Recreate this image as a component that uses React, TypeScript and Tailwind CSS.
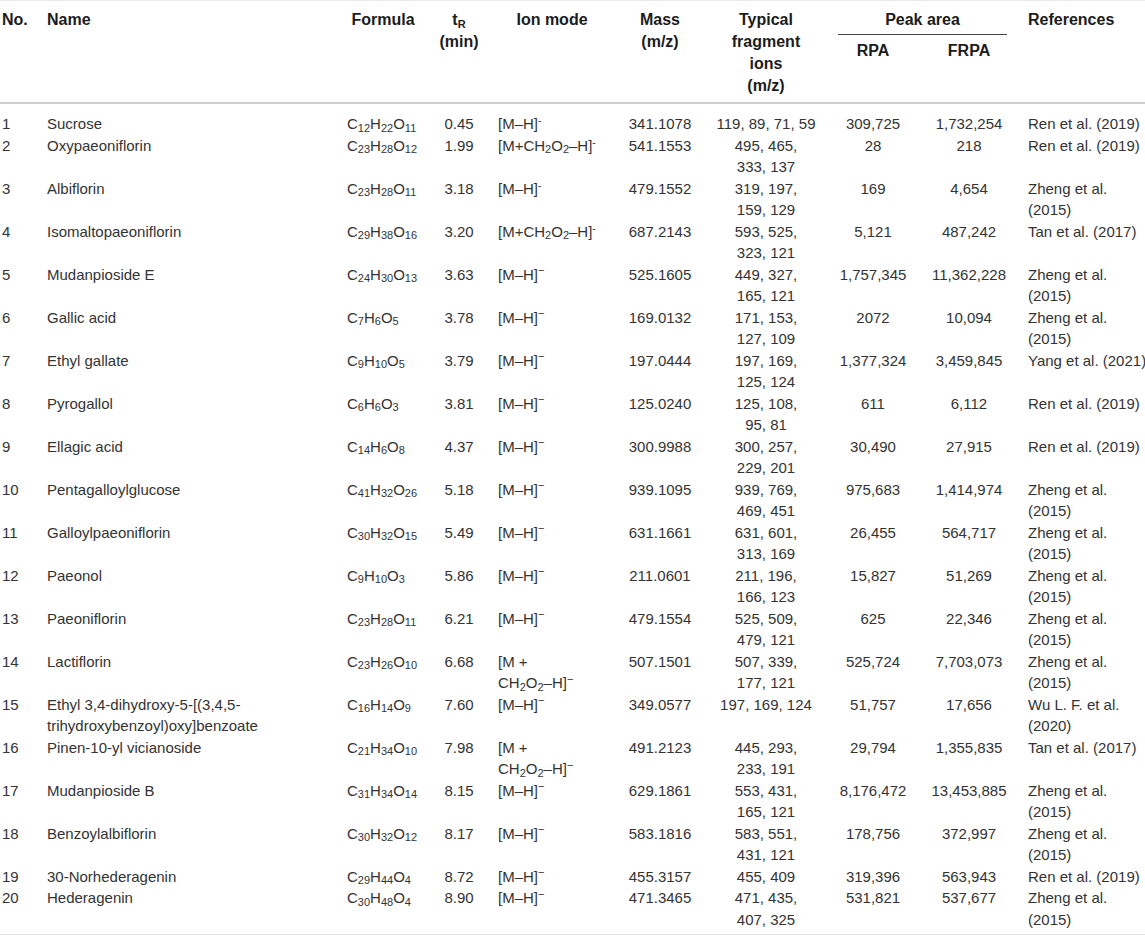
type Row = {
  no: number
  name: string[]
  formula: string
  tr: string
  ion: 'mh' | 'mhOld' | 'fa' | 'faWrap'
  mass: string
  frag: string[]
  rpa: string
  frpa: string
  refs: string[]
}

const zheng = ['Zheng et al.', '(2015)']
const ren = ['Ren et al. (2019)']

const rows: Row[] = [
  { no: 1, name: ['Sucrose'], formula: 'C12H22O11', tr: '0.45', ion: 'mhOld', mass: '341.1078', frag: ['119, 89, 71, 59'], rpa: '309,725', frpa: '1,732,254', refs: ren },
  { no: 2, name: ['Oxypaeoniflorin'], formula: 'C23H28O12', tr: '1.99', ion: 'fa', mass: '541.1553', frag: ['495, 465,', '333, 137'], rpa: '28', frpa: '218', refs: ren },
  { no: 3, name: ['Albiflorin'], formula: 'C23H28O11', tr: '3.18', ion: 'mhOld', mass: '479.1552', frag: ['319, 197,', '159, 129'], rpa: '169', frpa: '4,654', refs: zheng },
  { no: 4, name: ['Isomaltopaeoniflorin'], formula: 'C29H38O16', tr: '3.20', ion: 'fa', mass: '687.2143', frag: ['593, 525,', '323, 121'], rpa: '5,121', frpa: '487,242', refs: ['Tan et al. (2017)'] },
  { no: 5, name: ['Mudanpioside E'], formula: 'C24H30O13', tr: '3.63', ion: 'mh', mass: '525.1605', frag: ['449, 327,', '165, 121'], rpa: '1,757,345', frpa: '11,362,228', refs: zheng },
  { no: 6, name: ['Gallic acid'], formula: 'C7H6O5', tr: '3.78', ion: 'mh', mass: '169.0132', frag: ['171, 153,', '127, 109'], rpa: '2072', frpa: '10,094', refs: zheng },
  { no: 7, name: ['Ethyl gallate'], formula: 'C9H10O5', tr: '3.79', ion: 'mh', mass: '197.0444', frag: ['197, 169,', '125, 124'], rpa: '1,377,324', frpa: '3,459,845', refs: ['Yang et al. (2021)'] },
  { no: 8, name: ['Pyrogallol'], formula: 'C6H6O3', tr: '3.81', ion: 'mh', mass: '125.0240', frag: ['125, 108,', '95, 81'], rpa: '611', frpa: '6,112', refs: ren },
  { no: 9, name: ['Ellagic acid'], formula: 'C14H6O8', tr: '4.37', ion: 'mh', mass: '300.9988', frag: ['300, 257,', '229, 201'], rpa: '30,490', frpa: '27,915', refs: ren },
  { no: 10, name: ['Pentagalloylglucose'], formula: 'C41H32O26', tr: '5.18', ion: 'mh', mass: '939.1095', frag: ['939, 769,', '469, 451'], rpa: '975,683', frpa: '1,414,974', refs: zheng },
  { no: 11, name: ['Galloylpaeoniflorin'], formula: 'C30H32O15', tr: '5.49', ion: 'mh', mass: '631.1661', frag: ['631, 601,', '313, 169'], rpa: '26,455', frpa: '564,717', refs: zheng },
  { no: 12, name: ['Paeonol'], formula: 'C9H10O3', tr: '5.86', ion: 'mh', mass: '211.0601', frag: ['211, 196,', '166, 123'], rpa: '15,827', frpa: '51,269', refs: zheng },
  { no: 13, name: ['Paeoniflorin'], formula: 'C23H28O11', tr: '6.21', ion: 'mh', mass: '479.1554', frag: ['525, 509,', '479, 121'], rpa: '625', frpa: '22,346', refs: zheng },
  { no: 14, name: ['Lactiflorin'], formula: 'C23H26O10', tr: '6.68', ion: 'faWrap', mass: '507.1501', frag: ['507, 339,', '177, 121'], rpa: '525,724', frpa: '7,703,073', refs: zheng },
  { no: 15, name: ['Ethyl 3,4-dihydroxy-5-[(3,4,5-', 'trihydroxybenzoyl)oxy]benzoate'], formula: 'C16H14O9', tr: '7.60', ion: 'mh', mass: '349.0577', frag: ['197, 169, 124'], rpa: '51,757', frpa: '17,656', refs: ['Wu L. F. et al.', '(2020)'] },
  { no: 16, name: ['Pinen-10-yl vicianoside'], formula: 'C21H34O10', tr: '7.98', ion: 'faWrap', mass: '491.2123', frag: ['445, 293,', '233, 191'], rpa: '29,794', frpa: '1,355,835', refs: ['Tan et al. (2017)'] },
  { no: 17, name: ['Mudanpioside B'], formula: 'C31H34O14', tr: '8.15', ion: 'mh', mass: '629.1861', frag: ['553, 431,', '165, 121'], rpa: '8,176,472', frpa: '13,453,885', refs: zheng },
  { no: 18, name: ['Benzoylalbiflorin'], formula: 'C30H32O12', tr: '8.17', ion: 'mh', mass: '583.1816', frag: ['583, 551,', '431, 121'], rpa: '178,756', frpa: '372,997', refs: zheng },
  { no: 19, name: ['30-Norhederagenin'], formula: 'C29H44O4', tr: '8.72', ion: 'mh', mass: '455.3157', frag: ['455, 409'], rpa: '319,396', frpa: '563,943', refs: ren },
  { no: 20, name: ['Hederagenin'], formula: 'C30H48O4', tr: '8.90', ion: 'mh', mass: '471.3465', frag: ['471, 435,', '407, 325'], rpa: '531,821', frpa: '537,677', refs: zheng },
]

// "C12H22O11" -> C<sub>12</sub>H<sub>22</sub>O<sub>11</sub>
function Formula({ f }: { f: string }) {
  const parts = f.match(/[A-Z][a-z]?|\d+/g) || []
  return (
    <>
      {parts.map((p, i) =>
        /\d/.test(p) ? (
          <sub key={i} className="text-[11px]">{p}</sub>
        ) : (
          <span key={i}>{p}</span>
        )
      )}
    </>
  )
}

function IonMode({ kind }: { kind: Row['ion'] }) {
  if (kind === 'mhOld') {
    return <>[M–H]<sup className="text-[10px]">-</sup></>
  }
  if (kind === 'mh') {
    return <>[M–H]<sup className="text-[11px]">−</sup></>
  }
  if (kind === 'fa') {
    return (
      <>
        [M+CH<sub className="text-[11px]">2</sub>O<sub className="text-[11px]">2</sub>–H]
        <sup className="text-[10px]">-</sup>
      </>
    )
  }
  return (
    <>
      [M +<br />
      CH<sub className="text-[11px]">2</sub>O<sub className="text-[11px]">2</sub>–H]
      <sup className="text-[11px]">−</sup>
    </>
  )
}

function Lines({ items }: { items: string[] }) {
  return (
    <>
      {items.map((t, i) => (
        <div key={i}>{t}</div>
      ))}
    </>
  )
}

export default function App() {
  const th = 'align-top font-bold text-[16px] leading-[22px] text-[#1c1c1c] pt-[8px] pb-[5px] border-b-2 border-[#cfcfcf]'
  return (
    <div className="w-[1145px] h-[935px] bg-white overflow-hidden" style={{ fontFamily: '"Liberation Sans", Arial, sans-serif' }}>
      <table className="table-fixed w-[1145px] border-collapse border-t border-[#ebebeb]">
        <colgroup>
          <col className="w-[45px]" />
          <col className="w-[300px]" />
          <col className="w-[89px]" />
          <col className="w-[50px]" />
          <col className="w-[124px]" />
          <col className="w-[104px]" />
          <col className="w-[108px]" />
          <col className="w-[106px]" />
          <col className="w-[86px]" />
          <col className="w-[133px]" />
        </colgroup>
        <thead>
          <tr>
            <th className={`${th} text-left pl-[2px]`}>No.</th>
            <th className={`${th} text-left pl-[2px]`}>Name</th>
            <th className={`${th} text-center pr-[13px]`}>Formula</th>
            <th className={`${th} text-center`}>
              t<sub className="text-[11px]">R</sub>
              <br />
              (min)
            </th>
            <th className={`${th} text-center pl-[12px]`}>Ion mode</th>
            <th className={`${th} text-center`}>
              Mass
              <br />
              (m/z)
            </th>
            <th className={`${th} text-center`}>
              Typical
              <br />
              fragment
              <br />
              ions
              <br />
              (m/z)
            </th>
            <th colSpan={2} className={`${th} text-center`}>
              <div className="ml-[18px] mr-[5px] pb-[3px] border-b border-[#444]">Peak area</div>
              <div className="grid grid-cols-[106px_86px] pt-[5px]">
                <div>RPA</div>
                <div>FRPA</div>
              </div>
            </th>
            <th className={`${th} text-left pl-[16px]`}>References</th>
          </tr>
        </thead>
        <tbody className="text-[15px] leading-[21.5px] text-[#333]">
          {rows.map((r, i) => {
            const pad = i === 0 ? 'pt-[9px]' : i === rows.length - 1 ? 'pb-[4px]' : ''
            const td = `align-top ${pad}`
            return (
              <tr key={r.no} className={i === rows.length - 1 ? 'border-b border-[#e3e3e3]' : ''}>
                <td className={`${td} pl-[2px]`}>{r.no}</td>
                <td className={`${td} pl-[2px]`}>
                  <Lines items={r.name} />
                </td>
                <td className={`${td} pl-[2px] whitespace-nowrap`}>
                  <Formula f={r.formula} />
                </td>
                <td className={`${td} text-center`}>{r.tr}</td>
                <td className={`${td} pl-[14px] whitespace-nowrap`}>
                  <IonMode kind={r.ion} />
                </td>
                <td className={`${td} text-center`}>{r.mass}</td>
                <td className={`${td} text-center whitespace-nowrap`}>
                  <Lines items={r.frag} />
                </td>
                <td className={`${td} text-center`}>{r.rpa}</td>
                <td className={`${td} text-center`}>{r.frpa}</td>
                <td className={`${td} pl-[16px] whitespace-nowrap`}>
                  <Lines items={r.refs} />
                </td>
              </tr>
            )
          })}
        </tbody>
      </table>
    </div>
  )
}
